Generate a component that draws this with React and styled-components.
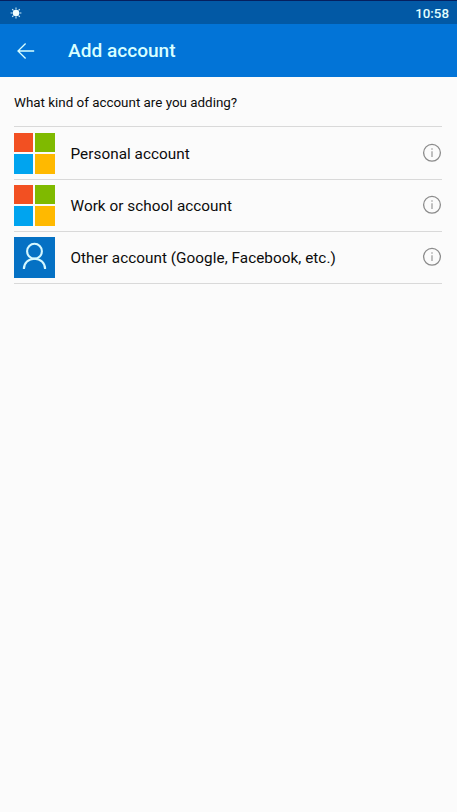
import React from 'react';
import styled, { createGlobalStyle } from 'styled-components';

const accounts = [
  { label: 'Personal account', kind: 'microsoft' },
  { label: 'Work or school account', kind: 'microsoft' },
  { label: 'Other account (Google, Facebook, etc.)', kind: 'other' },
];

const App = () => {
  return (
    <Screen>
      <GlobalStyle />
      {/* ---Status Bar--- */}
      <StatusBar>
        <SunIcon />
        <Clock>10:58</Clock>
      </StatusBar>
      <Header>
        <BackButton aria-label="Back">
          <ArrowIcon />
        </BackButton>
        <Title>Add account</Title>
      </Header>
      {/* ---Account List--- */}
      <Content>
        <Question>What kind of account are you adding?</Question>
        <AccountList>
          {accounts.map((account) => (
            <AccountRow key={account.label}>
              {account.kind === 'microsoft' ? <MicrosoftLogo /> : <PersonTile />}
              <AccountLabel>{account.label}</AccountLabel>
              <InfoIcon />
            </AccountRow>
          ))}
        </AccountList>
      </Content>
    </Screen>
  );
};

export default App;

const SunIcon = () => (
  <svg width="12" height="12" viewBox="0 0 12 12">
    <circle cx="6" cy="6" r="3.2" fill="#f2ffff" />
    <path
      d="M6 .6v2M6 9.400v2M.6 6h2M9.400 6h2M2.200 2.200l1.300 1.300M8.500 8.500l1.300 1.300M9.800 2.200L8.500 3.500M3.500 8.500L2.200 9.800"
      stroke="#c9e8f5"
      strokeWidth="1.1"
    />
  </svg>
);

const ArrowIcon = () => (
  <svg width="18" height="16" viewBox="0 0 18 16" fill="none" stroke="#d8ffff" strokeWidth="1.3">
    <path d="M17.2 8H1M8.6 0.5L1 8l7.6 7.5" />
  </svg>
);

const MicrosoftLogo = () => (
  <Logo>
    <Square $color="#f25022" />
    <Square $color="#7fba00" />
    <Square $color="#00a4ef" />
    <Square $color="#ffb900" />
  </Logo>
);

const PersonTile = () => (
  <Tile>
    <svg width="41" height="41" viewBox="0 0 41 41" fill="none" stroke="#d5f8ff" strokeWidth="2.1">
      <circle cx="20.500" cy="14.200" r="7.400" />
      <path d="M9.900 32c0-6 4.700-10.300 10.600-10.300s10.600 4.300 10.600 10.300" />
    </svg>
  </Tile>
);

const InfoIcon = () => (
  <Info width="20" height="20" viewBox="0 0 20 20" fill="none" stroke="#8b8b8b">
    <circle cx="10" cy="9.800" r="8.400" strokeWidth="1.300" />
    <path d="M10 8.300v5.700M10 5.300v1.500" stroke="#8f8f8f" strokeWidth="1.100" />
  </Info>
);

const GlobalStyle = createGlobalStyle`
  * {
    box-sizing: border-box;
  }

  body {
    margin: 0;
    background-color: #fbfbfb;
    font-family: Roboto, sans-serif;
  }
`;

const Screen = styled.div`
  min-height: 812px;
  background-color: #fbfbfb;
  color: #0c0c0c;
`;

const StatusBar = styled.div`
  height: 24px;
  padding: 0 8px 0 10px;
  display: flex;
  align-items: center;
  justify-content: space-between;
  border-top: 1px solid #05205f;
  background-color: #0259a5;
`;

const Clock = styled.div`
  padding-top: 2px;
  color: #e2ffff;
  font-size: 13.3px;
  font-weight: 500;
`;

const Header = styled.header`
  height: 53px;
  padding-left: 17px;
  display: flex;
  align-items: center;
  background-color: #0274d7;
`;

const BackButton = styled.button`
  width: 51px;
  padding: 0;
  display: flex;
  border: 0;
  background: none;
`;

const Title = styled.h1`
  margin: 0;
  padding-top: 1px;
  color: #d8ffff;
  font-size: 19.1px;
  font-weight: 500;
  line-height: 24px;
`;

const Content = styled.main`
  padding: 17px 15px 0 14px;
`;

const Question = styled.p`
  margin: 0 0 15px;
  font-size: 13.4px;
  line-height: 17px;
`;

const AccountList = styled.ul`
  margin: 0;
  padding: 0;
  list-style: none;
  border-top: 1px solid #d9d9d9;
`;

const AccountRow = styled.li`
  padding: 5px 0;
  display: flex;
  align-items: center;
  border-bottom: 1px solid #d9d9d9;

  &:first-child {
    padding-top: 6px;
  }
`;

const AccountLabel = styled.span`
  flex-grow: 1;
  margin-left: 15.5px;
  font-size: 15.3px;
  letter-spacing: 0.04px;
`;

const Info = styled.svg`
  margin-bottom: 1px;
`;

const Logo = styled.div`
  width: 41px;
  height: 41px;
  display: grid;
  grid-template-columns: 19px 20px;
  grid-template-rows: 19px 20px;
  gap: 2px;
`;

const Square = styled.div`
  background-color: ${(props) => props.$color};
`;

const Tile = styled.div`
  width: 41px;
  height: 41px;
  background-color: #0571c4;
`;
